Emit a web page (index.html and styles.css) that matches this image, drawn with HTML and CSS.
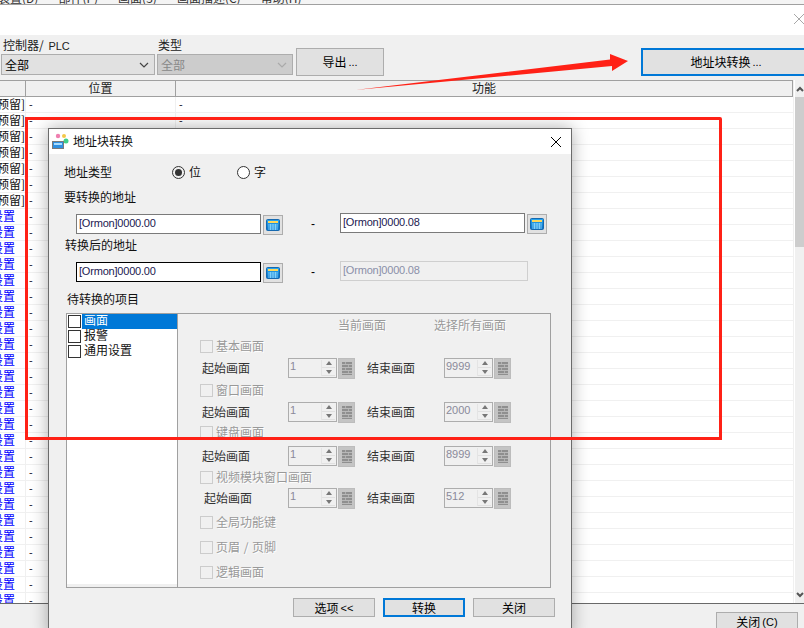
FILE: index.html
```html
<!DOCTYPE html>
<html lang="zh-CN">
<head>
<meta charset="utf-8">
<title>地址块转换</title>
<link rel="stylesheet" href="styles.css">
</head>
<body>
<svg class="defs" width="0" height="0" aria-hidden="true">
  <defs>
    <linearGradient id="calcBlue" x1="0" y1="0" x2="0" y2="1"><stop offset="0" stop-color="#2aa8f0"/><stop offset="1" stop-color="#0b6fc4"/></linearGradient>
    <symbol id="calc" viewBox="0 0 14 12">
      <rect x="0.5" y="0.5" width="13" height="11" rx="1" fill="url(#calcBlue)" stroke="#1569b0"/>
      <rect x="2" y="2" width="10" height="2" fill="#ffd75a"/>
      <path d="M2 6h10M2 8h10M2 10h10M4.5 5v6M7 5v6M9.5 5v6" stroke="#7fd0fb" stroke-width="1"/>
    </symbol>
    <symbol id="keys" viewBox="0 0 10 13">
      <rect x="0" y="0" width="10" height="13" fill="#8f8f8f"/>
      <path d="M0 2.5h10M0 5.5h10M0 8.5h10M0 11.5h10" stroke="#b8b8b8" stroke-width="1"/>
      <path d="M3.5 0v2M6.5 3v2M3.5 6v2M6.5 9v2" stroke="#b0b0b0" stroke-width="1"/>
    </symbol>
  </defs>
</svg>

<div class="window">
  <nav class="menubar">
    <span class="menu-item">装置(D)</span>
    <span class="menu-item">部件(P)</span>
    <span class="menu-item">画面(3)</span>
    <span class="menu-item">画面描述(C)</span>
    <span class="menu-item">帮助(H)</span>
  </nav>
  <div class="titlestrip">
    <svg class="strip-close" width="10" height="10" viewBox="0 0 10 10"><path d="M0 0L10 10M10 0L0 10" stroke="#a8a8a8" fill="none"/></svg>
  </div>

  <div class="toolbar">
    <div class="field field-a">
      <span class="field-label">控制器/ <span class="lat plc">PLC</span></span>
      <div class="select"><span>全部</span><svg class="chev" width="10" height="6" viewBox="0 0 10 6"><path d="M1 1l4 4 4-4" fill="none" stroke="#444" stroke-width="1.2"/></svg></div>
    </div>
    <div class="field field-b">
      <span class="field-label">类型</span>
      <div class="select select-off"><span>全部</span><svg class="chev" width="10" height="6" viewBox="0 0 10 6"><path d="M1 1l4 4 4-4" fill="none" stroke="#aaa" stroke-width="1.2"/></svg></div>
    </div>
    <button class="btn btn-export">导出<span class="lat">...</span></button>
    <button class="btn btn-primary btn-convert">地址块转换<span class="lat">...</span></button>
  </div>

  <div class="tablewrap">
    <div class="table">
      <div class="thead"><span></span><span>位置</span><span>功能</span></div>
      <div class="row"><span class="c1 res">预留]</span><span class="c2">-</span><span class="c3">-</span></div>
      <div class="row"><span class="c1 res">预留]</span><span class="c2">-</span><span class="c3">-</span></div>
      <div class="row"><span class="c1 res">预留]</span><span class="c2">-</span><span class="c3">-</span></div>
      <div class="row"><span class="c1 res">预留]</span><span class="c2">-</span><span class="c3">-</span></div>
      <div class="row"><span class="c1 res">预留]</span><span class="c2">-</span><span class="c3">-</span></div>
      <div class="row"><span class="c1 res">预留]</span><span class="c2">-</span><span class="c3">-</span></div>
      <div class="row"><span class="c1 res">预留]</span><span class="c2">-</span><span class="c3">-</span></div>
      <div class="row"><span class="c1 set">设置</span><span class="c2">-</span><span class="c3"></span></div>
      <div class="row"><span class="c1 set">设置</span><span class="c2">-</span><span class="c3"></span></div>
      <div class="row"><span class="c1 set">设置</span><span class="c2">-</span><span class="c3"></span></div>
      <div class="row"><span class="c1 set">设置</span><span class="c2">-</span><span class="c3"></span></div>
      <div class="row"><span class="c1 set">设置</span><span class="c2">-</span><span class="c3"></span></div>
      <div class="row"><span class="c1 set">设置</span><span class="c2">-</span><span class="c3"></span></div>
      <div class="row"><span class="c1 set">设置</span><span class="c2">-</span><span class="c3"></span></div>
      <div class="row"><span class="c1 set">设置</span><span class="c2">-</span><span class="c3"></span></div>
      <div class="row"><span class="c1 set">设置</span><span class="c2">-</span><span class="c3"></span></div>
      <div class="row"><span class="c1 set">设置</span><span class="c2">-</span><span class="c3"></span></div>
      <div class="row"><span class="c1 set">设置</span><span class="c2">-</span><span class="c3"></span></div>
      <div class="row"><span class="c1 set">设置</span><span class="c2">-</span><span class="c3"></span></div>
      <div class="row"><span class="c1 set">设置</span><span class="c2">-</span><span class="c3"></span></div>
      <div class="row"><span class="c1 set">设置</span><span class="c2">-</span><span class="c3"></span></div>
      <div class="row"><span class="c1 set">设置</span><span class="c2">-</span><span class="c3"></span></div>
      <div class="row"><span class="c1 set">设置</span><span class="c2">-</span><span class="c3"></span></div>
      <div class="row"><span class="c1 set">设置</span><span class="c2">-</span><span class="c3"></span></div>
      <div class="row"><span class="c1 set">设置</span><span class="c2">-</span><span class="c3"></span></div>
      <div class="row"><span class="c1 set">设置</span><span class="c2">-</span><span class="c3"></span></div>
      <div class="row"><span class="c1 set">设置</span><span class="c2">-</span><span class="c3"></span></div>
      <div class="row"><span class="c1 set">设置</span><span class="c2">-</span><span class="c3"></span></div>
      <div class="row"><span class="c1 set">设置</span><span class="c2">-</span><span class="c3"></span></div>
      <div class="row"><span class="c1 set">设置</span><span class="c2">-</span><span class="c3"></span></div>
      <div class="row"><span class="c1 set">设置</span><span class="c2">-</span><span class="c3"></span></div>
      <div class="row"><span class="c1 set">设置</span><span class="c2">-</span><span class="c3"></span></div>
    </div>
    <div class="scrollbar">
      <div class="sb-btn"><svg width="8" height="6" viewBox="0 0 8 6"><path d="M1 5l3-3 3 3" fill="none" stroke="#555" stroke-width="2"/></svg></div>
      <div class="sb-thumb"></div>
      <div class="sb-track"></div>
      <div class="sb-btn sb-btn-end"><svg width="8" height="6" viewBox="0 0 8 6"><path d="M1 1l3 3 3-3" fill="none" stroke="#555" stroke-width="2"/></svg></div>
    </div>
  </div>

  <div class="footer">
    <button class="btn btn-close">关闭<span class="lat">(C)</span></button>
  </div>
</div>

<section class="dialog">
  <header class="dlg-title">
    <svg class="dlg-icon" width="17" height="17" viewBox="0 0 17 17">
      <circle cx="6" cy="3" r="2.2" fill="#ef7fb0"/>
      <circle cx="12" cy="3" r="2" fill="#f4c84a"/>
      <circle cx="14" cy="8" r="2.5" fill="#3fcf8a"/>
      <rect x="0.5" y="8.5" width="11" height="7" fill="#2f8fe0" stroke="#7a7a7a"/>
      <rect x="2" y="10" width="8" height="2" fill="#a8dcff"/>
    </svg>
    <span class="dlg-name">地址块转换</span>
    <svg class="dlg-close" width="10" height="10" viewBox="0 0 10 10"><path d="M0 0L10 10M10 0L0 10" stroke="#000" fill="none"/></svg>
  </header>

  <div class="dlg-body">
    <div class="type-row">
      <span class="type-label">地址类型</span>
      <span class="radio-wrap radio-first"><i class="radio radio-on"></i>位</span>
      <span class="radio-wrap"><i class="radio"></i>字</span>
    </div>
    <div class="sec-label sec-from">要转换的地址</div>
    <div class="addr-row addr-from">
      <span class="addr input">[Ormon]0000.00</span>
      <span class="calc-btn"><svg width="14" height="12"><use href="#calc"/></svg></span>
      <span class="dash">-</span>
      <span class="addr-group">
        <span class="addr input">[Ormon]0000.08</span>
        <span class="calc-btn"><svg width="14" height="12"><use href="#calc"/></svg></span>
      </span>
    </div>
    <div class="sec-label sec-to">转换后的地址</div>
    <div class="addr-row addr-to">
      <span class="addr input input-focus">[Ormon]0000.00</span>
      <span class="calc-btn"><svg width="14" height="12"><use href="#calc"/></svg></span>
      <span class="dash">-</span>
      <span class="addr-group">
        <span class="addr input input-off">[Ormon]0000.08</span>
      </span>
    </div>
    <div class="sec-label sec-items">待转换的项目</div>

    <div class="panel">
      <div class="list-pane">
        <ul class="list">
          <li class="list-item"><i class="box"></i><span class="item-text item-sel">画面</span></li>
          <li class="list-item"><i class="box"></i><span class="item-text">报警</span></li>
          <li class="list-item"><i class="box"></i><span class="item-text">通用设置</span></li>
        </ul>
      </div>
      <div class="opts">
        <div class="opt-full opt-head"><span class="head-a">当前画面</span><span class="head-b">选择所有画面</span></div>

        <label class="opt-full opt-check"><i class="box box-off"></i>基本画面</label>
        <span class="rng-label">起始画面</span>
        <span class="spin"><span class="spin-val">1</span><span class="spin-arrows"><i class="up"></i><i class="down"></i></span></span>
        <span class="keys"><svg width="10" height="13"><use href="#keys"/></svg></span>
        <span></span>
        <span class="end-label">结束画面</span>
        <span class="spin"><span class="spin-val">9999</span><span class="spin-arrows"><i class="up"></i><i class="down"></i></span></span>
        <span class="keys"><svg width="10" height="13"><use href="#keys"/></svg></span>

        <label class="opt-full opt-check"><i class="box box-off"></i>窗口画面</label>
        <span class="rng-label">起始画面</span>
        <span class="spin"><span class="spin-val">1</span><span class="spin-arrows"><i class="up"></i><i class="down"></i></span></span>
        <span class="keys"><svg width="10" height="13"><use href="#keys"/></svg></span>
        <span></span>
        <span class="end-label">结束画面</span>
        <span class="spin"><span class="spin-val">2000</span><span class="spin-arrows"><i class="up"></i><i class="down"></i></span></span>
        <span class="keys"><svg width="10" height="13"><use href="#keys"/></svg></span>

        <label class="opt-full opt-check"><i class="box box-off"></i>键盘画面</label>
        <span class="rng-label">起始画面</span>
        <span class="spin"><span class="spin-val">1</span><span class="spin-arrows"><i class="up"></i><i class="down"></i></span></span>
        <span class="keys"><svg width="10" height="13"><use href="#keys"/></svg></span>
        <span></span>
        <span class="end-label">结束画面</span>
        <span class="spin"><span class="spin-val">8999</span><span class="spin-arrows"><i class="up"></i><i class="down"></i></span></span>
        <span class="keys"><svg width="10" height="13"><use href="#keys"/></svg></span>

        <label class="opt-full opt-check"><i class="box box-off"></i>视频模块窗口画面</label>
        <span class="rng-label rng-label-in">起始画面</span>
        <span class="spin"><span class="spin-val">1</span><span class="spin-arrows"><i class="up"></i><i class="down"></i></span></span>
        <span class="keys"><svg width="10" height="13"><use href="#keys"/></svg></span>
        <span></span>
        <span class="end-label">结束画面</span>
        <span class="spin"><span class="spin-val">512</span><span class="spin-arrows"><i class="up"></i><i class="down"></i></span></span>
        <span class="keys"><svg width="10" height="13"><use href="#keys"/></svg></span>

        <label class="opt-full opt-check"><i class="box box-off"></i>全局功能键</label>
        <label class="opt-full opt-check opt-wide"><i class="box box-off"></i>页眉 / 页脚</label>
        <label class="opt-full opt-check"><i class="box box-off"></i>逻辑画面</label>
      </div>
    </div>

    <div class="dlg-actions">
      <button class="btn btn-dlg">选项<span class="lat">&lt;&lt;</span></button>
      <button class="btn btn-dlg btn-primary">转换</button>
      <button class="btn btn-dlg">关闭</button>
    </div>
  </div>
</section>

<svg class="arrow" width="290" height="50" viewBox="0 0 290 50" aria-hidden="true">
  <path d="M1 37L256 6.5L256 1L274 8L258 18L258 13Z" fill="#ff2116"/>
</svg>
<div class="redbox"></div>
</body>
</html>
```
FILE: styles.css
```css
* { box-sizing: border-box; }
html, body { margin: 0; padding: 0; }
body {
  width: 804px;
  height: 628px;
  overflow: hidden;
  position: relative;
  font: 12px/16px "Noto Sans CJK SC", "Liberation Sans", sans-serif;
  color: #000;
  background: #f0f0f0;
}
.lat, .input, .spin-val { font-family: "Liberation Sans", sans-serif; font-size: 11px; }
.plc { margin-left: 2px; color: #222; }
.defs { position: absolute; }
i { display: block; font-style: normal; }

.window { display: flex; flex-direction: column; height: 628px; }

.menubar {
  height: 5px;
  flex: none;
  display: flex;
  align-items: flex-end;
  overflow: hidden;
  border-bottom: 1px solid #a0a0a0;
  background: #f4f4f4;
  color: #333;
  line-height: 12px;
  padding-bottom: 0;
}
.menu-item { margin-right: 20px; flex: none; }
.menu-item:first-child { margin-left: -2px; }

.titlestrip {
  height: 30px;
  flex: none;
  background: #fff;
  display: flex;
  justify-content: flex-end;
  align-items: center;
  padding-bottom: 2px;
}

.toolbar {
  height: 45px;
  flex: none;
  display: flex;
  align-items: flex-start;
  padding-left: 1px;
  background: #f0f0f0;
}
.field { display: flex; flex-direction: column; }
.field-label { height: 19px; line-height: 19px; padding-left: 2px; color: #222; }
.field-a { width: 154px; margin-right: 2px; }
.field-b { width: 136px; margin-right: 3px; }
.field-b .field-label { padding-left: 1px; }
.select {
  height: 21px;
  background: #e1e1e1;
  border: 1px solid #adadad;
  display: flex;
  align-items: center;
  justify-content: space-between;
  padding: 0 5px 0 3px;
}
.select-off { background: #ccc; color: #888; }

.btn {
  font: inherit;
  padding: 0;
  background: #e1e1e1;
  border: 1px solid #adadad;
  color: #000;
  display: flex;
  align-items: center;
  justify-content: center;
  gap: 2px;
}
.btn-primary { border: 2px solid #0078d7; }
.btn-export { width: 88px; height: 28px; margin-top: 13px; }
.btn-convert { width: 170px; height: 28px; margin: 13px -7px 0 auto; }

.tablewrap { flex: 1; min-height: 0; display: flex; background: #fff; overflow: hidden; }
.table { width: 794px; flex: none; overflow: hidden; border-right: 1px solid #f0f0f0; }
.thead, .row { display: grid; grid-template-columns: 26px 150px 1fr; }
.thead {
  height: 17px;
  background: #f0f0f0;
  border-top: 1px solid #a0a0a0;
  border-bottom: 1px solid #a0a0a0;
  border-right: 1px solid #a0a0a0;
  line-height: 14px;
  text-align: center;
  color: #222;
}
.thead span { border-right: 1px solid #a0a0a0; overflow: hidden; }
.thead span:last-child { border-right: 0; }
.row { height: 16px; border-bottom: 1px solid #f0f0f0; line-height: 13px; }
.row span { border-right: 1px solid #f0f0f0; overflow: hidden; white-space: nowrap; }
.row span:last-child { border-right: 0; }
.c1 { display: flex; justify-content: flex-end; }
.res { color: #111; }
.set { color: #0000ff; padding-right: 10px; }
.c2, .c3 { padding-left: 3px; font-family: "Liberation Sans", sans-serif; font-size: 11px; line-height: 15px; color: #223; }

.scrollbar { flex: 1; margin-left: 1px; display: flex; flex-direction: column; background: #f0f0f0; }
.sb-btn { height: 17px; flex: none; display: flex; align-items: center; justify-content: center; background: #f0f0f0; }
.sb-thumb { height: 150px; flex: none; background: #cdcdcd; }
.sb-track { flex: 1; }

.footer {
  height: 25px;
  flex: none;
  background: #f0f0f0;
  border-top: 1px solid #696969;
  padding: 8px 6px 0 0;
  display: flex;
  justify-content: flex-end;
  overflow: hidden;
}
.btn-close { width: 82px; height: 24px; flex: none; align-items: flex-start; padding-top: 1px; }

.dialog {
  position: absolute;
  left: 48px;
  top: 128px;
  width: 524px;
  height: 510px;
  background: #f0f0f0;
  border: 1px solid #6b6b6b;
  box-shadow: 0 0 16px rgba(0, 0, 0, 0.32);
}
.dlg-title {
  height: 25px;
  background: #fff;
  display: flex;
  align-items: center;
  padding: 0 10px 0 3px;
  line-height: 14px;
}
.dlg-icon { margin-right: 4px; }
.dlg-name { flex: 1; color: #111; padding-bottom: 2px; }

.dlg-body { padding: 8px 0 0 15px; }
.type-row { height: 20px; display: flex; align-items: center; color: #111; }
.type-label { width: 108px; }
.radio-wrap { display: flex; align-items: center; width: 65px; }
.radio {
  width: 13px;
  height: 13px;
  border: 1px solid #333;
  border-radius: 50%;
  background: #fff;
  margin-right: 4px;
  display: flex;
  align-items: center;
  justify-content: center;
}
.radio-first .radio { background: #f0f0f0; }
.radio-on::after { content: ""; width: 7px; height: 7px; border-radius: 50%; background: #333; }

.sec-label { height: 20px; line-height: 20px; color: #111; }
.sec-from { margin-top: 6px; line-height: 18px; }
.sec-to { margin-top: 1px; margin-left: 1px; }
.sec-items { margin-top: 7px; margin-left: 3px; }

.addr-row { display: flex; align-items: flex-start; height: 20px; margin-left: 12px; }
.addr-from { margin-top: 6px; }
.addr-to { margin-top: 7px; }
.addr-group { display: flex; margin-top: -1px; }
.input {
  display: block;
  width: 185px;
  height: 20px;
  background: #fff;
  border: 1px solid #7a7a7a;
  padding-left: 2px;
  line-height: 17px;
  letter-spacing: -0.2px;
  color: #1c2050;
}
.input-focus { border-color: #000; }
.input-off { width: 188px; background: #f0f0f0; border-color: #cfcfcf; color: #8a8fa8; }
.calc-btn {
  width: 20px;
  height: 20px;
  margin: 1px 0 0 2px;
  background: #e1e1e1;
  border: 1px solid #adadad;
  display: flex;
  align-items: center;
  justify-content: center;
  flex: none;
}
.dash { width: 57px; padding-left: 28px; line-height: 20px; font-family: "Liberation Sans", sans-serif; flex: none; }

.panel {
  width: 485px;
  height: 275px;
  margin: 4px 0 0 2px;
  border: 1px solid #a0a0a0;
  display: flex;
}
.list-pane { width: 111px; flex: none; border-right: 1px solid #a0a0a0; padding-bottom: 3px; display: flex; }
.list { flex: 1; margin: 0; padding: 0; list-style: none; background: #fff; }
.list-item { height: 15px; display: flex; align-items: center; padding-left: 1px; }
.box { width: 13px; height: 13px; border: 1px solid #333; background: #fff; flex: none; }
.item-text { flex: 1; height: 15px; line-height: 12px; margin-left: 1px; padding-left: 2px; color: #111; }
.item-sel { background: #0078d7; color: #fff; }

.opts {
  flex: 1;
  padding-left: 22px;
  display: grid;
  grid-template-columns: 88px 50px 17px 12px 77px 50px 17px;
  grid-template-rows: 22px 20px 24px 20px 24px 16px 32px 10px 32px 16px 34px 16px;
  align-items: center;
  justify-items: start;
  color: #999;
  text-shadow: 1px 1px 0 #fff;
  align-content: start;
}
.opt-full { grid-column: 1 / -1; display: flex; align-items: center; }
.opt-head { padding-left: 138px; }
.head-a { width: 96px; }
.box-off { background: transparent; border-color: #ccc; margin-right: 3px; }
.opt-wide { word-spacing: 1px; }
.rng-label, .end-label { color: #333; text-shadow: none; padding-left: 2px; }
.end-label { padding-left: 0; }
.rng-label-in { padding-left: 4px; }

.spin {
  width: 49px;
  height: 20px;
  border: 1px solid #adadad;
  display: flex;
  text-shadow: none;
}
.spin-val { flex: 1; padding-left: 1px; line-height: 15px; color: #8a8a9a; }
.spin-arrows { width: 14px; margin: 1px 1px 1px 0; display: flex; flex-direction: column; gap: 1px; border-left: 1px solid #e4e4e4; }
.up, .down { flex: 1; display: flex; align-items: center; justify-content: center; background: #f0f0f0; border-bottom: 1px solid #e0e0e0; }
.up::after { content: ""; border: 3px solid transparent; border-top: 0; border-bottom: 4px solid #777; }
.down::after { content: ""; border: 3px solid transparent; border-bottom: 0; border-top: 4px solid #777; }
.keys {
  width: 17px;
  height: 21px;
  background: #c4c4c4;
  border: 1px solid #bcbcbc;
  display: flex;
  align-items: center;
  justify-content: center;
}

.dlg-actions { width: 491px; margin-top: 10px; display: flex; justify-content: flex-end; gap: 8px; }
.btn-dlg { width: 82px; height: 19px; line-height: 16px; }

.arrow { position: absolute; left: 354px; top: 53px; }
.redbox {
  position: absolute;
  left: 25px;
  top: 117px;
  width: 697px;
  height: 323px;
  border: 3px solid #ff2116;
  border-top-right-radius: 2px;
  pointer-events: none;
}
```
